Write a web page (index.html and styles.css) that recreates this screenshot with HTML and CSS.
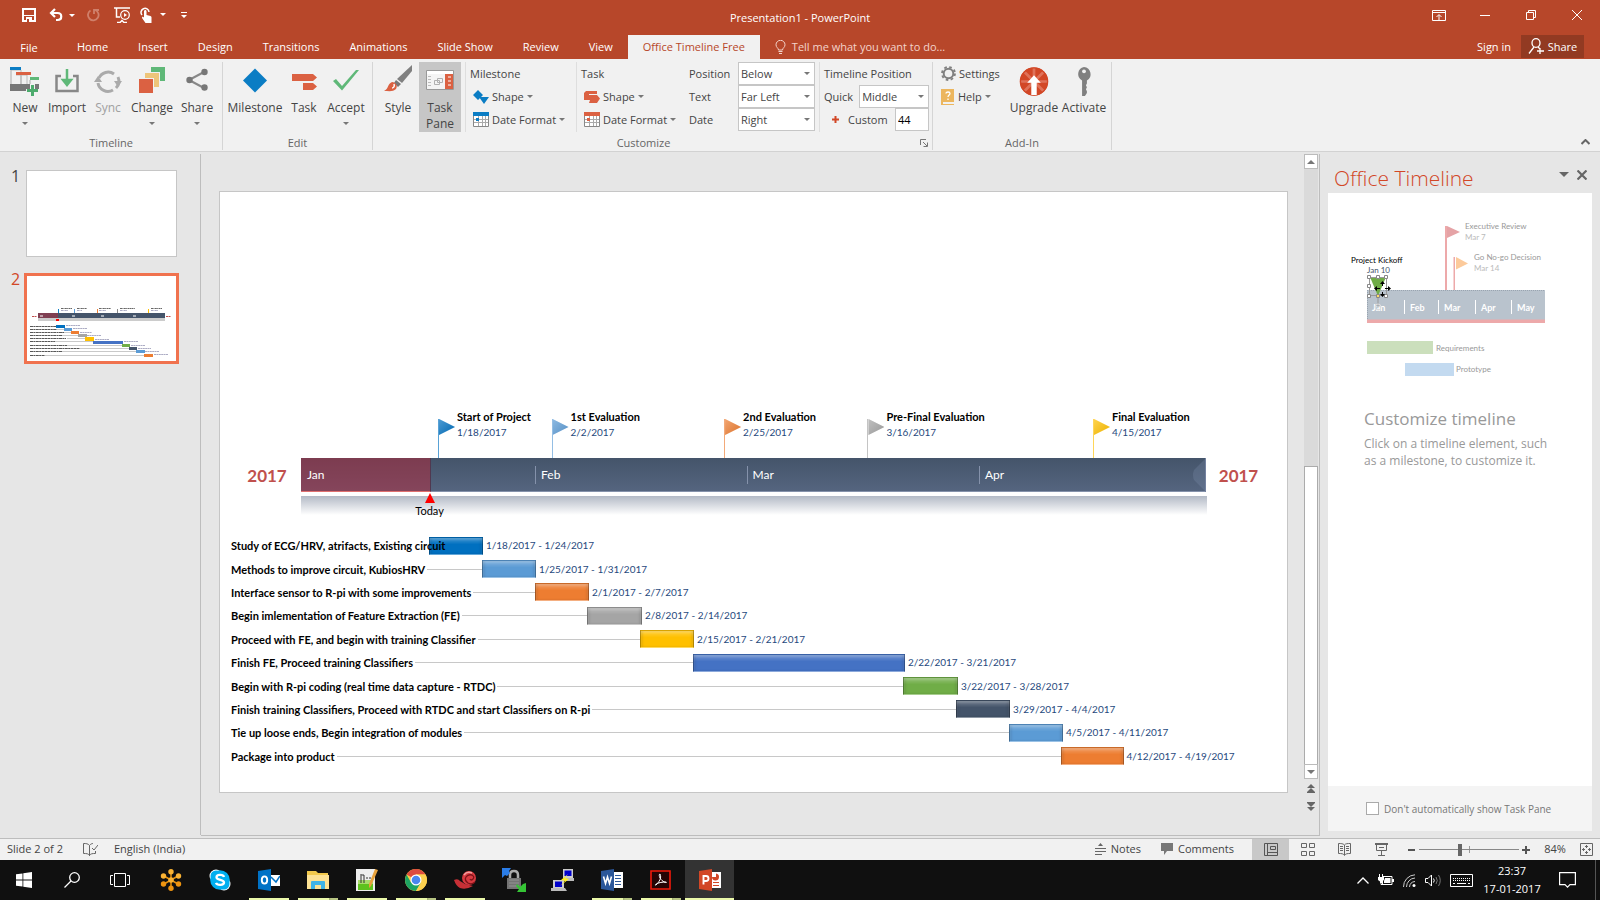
FILE: index.html
```html
<!DOCTYPE html>
<html lang="en">
<head>
<meta charset="utf-8">
<title>Presentation1 - PowerPoint</title>
<link rel="stylesheet" href="styles.css">
</head>
<body>
<div class="app">
<header class="chrome">
  <div class="titlebar">
    <div class="quick">
      <button aria-label="Save"><svg width="14" height="14" viewBox="0 0 14 14"><path d="M1 1h12v12H1z" fill="none" stroke="#fff" stroke-width="2"/><path d="M1 7h12v1H1zM4 9h6v5H4z" fill="#fff"/><path d="M5 11h2v3H5z" fill="#b7472a"/></svg></button>
      <button aria-label="Undo" class="q36"><svg width="26" height="14" viewBox="0 0 26 14"><path d="M6 1L2 5l4 4M2 5h6.500c5 0 5 7 0 7H7" fill="none" stroke="#fff" stroke-width="2.200"/><path d="M20 6h6l-3 3z" fill="#fff"/></svg></button>
      <button aria-label="Redo" class="q26"><svg width="14" height="14" viewBox="0 0 14 14"><path d="M4.500 2.500A5.300 5.300 0 1 0 9 2M8 6V2h5" fill="none" stroke="#d0806b" stroke-width="1.800"/></svg></button>
      <button aria-label="Start from beginning" class="q32"><svg width="16" height="16" viewBox="0 0 16 16" fill="none" stroke="#fff"><path d="M0 1h16M2.500 1v9H6M3 15.500h3l2-2 2 2h3" stroke-width="1.500"/><circle cx="11" cy="8" r="4.300" stroke-width="1.200"/><path d="M10 6l3 2-3 2z" fill="#fff" stroke="none"/></svg></button>
      <button aria-label="Touch mode"><svg width="26" height="16" viewBox="0 0 26 16"><path d="M2 8A4 4 0 1 1 9 5" fill="none" stroke="#fff" stroke-width="1.500"/><path d="M4 4.500c0-2 2.500-2 2.500 0V8l4 1c1 .5 1 1 1 2v5H5.500L2 11c0-1.500 1-1.500 2-.5z" fill="#fff"/><path d="M20 6h6l-3 3z" fill="#fff"/></svg></button>
      <button aria-label="Customize toolbar" class="q32"><svg width="6" height="7" viewBox="0 0 6 7" fill="#fff"><path d="M0 0h6v1H0zM0 3h6L3 6z"/></svg></button>
    </div>
    <h1>Presentation1 - PowerPoint</h1>
    <div class="wincontrols">
      <button aria-label="Ribbon display"><svg width="14" height="11" viewBox="0 0 14 11" fill="none" stroke="#fff"><path d="M.5.5h13v10H.5zM1 2.500h12M7 10V5M4.500 7L7 4.500 9.500 7"/></svg></button>
      <button aria-label="Minimize"><svg width="10" height="10" viewBox="0 0 10 10" stroke="#fff"><path d="M0 5.500h10"/></svg></button>
      <button aria-label="Restore"><svg width="10" height="10" viewBox="0 0 10 10" fill="none" stroke="#fff"><path d="M.5 2.500h7v7h-7zM2.500 2V.5h7v7H8"/></svg></button>
      <button aria-label="Close"><svg width="10" height="10" viewBox="0 0 10 10" stroke="#fff"><path d="M0 0l10 10M10 0L0 10"/></svg></button>
    </div>
  </div>
  <nav class="tabs">
    <button class="file">File</button><button>Home</button><button>Insert</button><button>Design</button><button>Transitions</button><button>Animations</button><button>Slide Show</button><button>Review</button><button>View</button><button class="active">Office Timeline Free</button>
    <button class="tell"><svg width="11" height="14" viewBox="0 0 11 14" fill="none" stroke="#f3d3ca"><path d="M3.500 10C3.500 8 1 7.500 1 4.800a4.500 4.500 0 0 1 9 0C10 7.500 7.500 8 7.500 10zM3.500 11.500h4M4 13.500h3"/></svg>Tell me what you want to do...</button>
    <span class="grow"></span>
    <button class="signin">Sign in</button>
    <button class="share"><svg width="17" height="17" viewBox="0 0 17 17" fill="none" stroke="#fff" stroke-width="1.300"><ellipse cx="8" cy="5" rx="4" ry="4.300"/><path d="M6 9L1 15.500M10 9l1.500 1.500M12 10v6M9 13h7"/></svg>Share</button>
  </nav>
</header>

<section class="ribbon">
  <div class="group g-timeline">
    <div class="tools">
      <button class="big w40"><svg width="30" height="29" viewBox="0 0 30 29"><path d="M1 3v14M11 8v9M20 13v4" stroke="#aaa" fill="none"/><path d="M1 3h10v14M6 8h11v9" stroke="#bbb" fill="none"/><path d="M0 0h11v3H0z" fill="#0b7dc4"/><path d="M6 5h15v3H6z" fill="#db6142"/><path d="M20 10h9v3h-9z" fill="#5fb878"/><path d="M0 17h29v7H0z" fill="#777"/><path d="M20 17h5v5h5v4h-5v3h-5v-3h-4v-4h4z" fill="#f1f1f1"/><path d="M21 18h3v4h4v3h-4v4h-3v-4h-4v-3h4z" fill="#4dab6d"/></svg>New<i class="caret"></i></button>
      <button class="big w44"><svg width="24" height="29" viewBox="0 0 24 29" fill="none"><path d="M6 9H1.500v15h21V9H18" stroke="#888" stroke-width="2.500"/><path d="M12 2v15M8 13l4 5 4-5z" stroke="#5fb878" stroke-width="2.500" fill="#5fb878"/></svg>Import</button>
      <button class="big w38 dim" disabled><svg width="28" height="29" viewBox="0 0 28 29" fill="none" stroke="#aaa" stroke-width="3"><path d="M5 11a10 10 0 0 1 15-4M24 10a10 10 0 0 1-2 11M19 23a10 10 0 0 1-15-7"/><path d="M0 15h8l-4-6zM20 14h8l-4 6z" fill="#aaa" stroke="none"/></svg>Sync</button>
      <button class="big w50"><svg width="26" height="29" viewBox="0 0 26 29"><path d="M12 0h14v14H12z" fill="#5fb878"/><path d="M5 5h16v16H5z" fill="#f1f1f1"/><path d="M6 6h14v14H6z" fill="#eec57a"/><path d="M0 11h15v15H0z" fill="#f1f1f1"/><path d="M0 12h14v14H0z" fill="#db6142"/></svg>Change<i class="caret"></i></button>
      <button class="big w40"><svg width="22" height="29" viewBox="0 0 22 29" fill="#777"><path d="M3 13L18 5M3 13l15 8" stroke="#888" stroke-width="2"/><circle cx="3.500" cy="13" r="3.200"/><circle cx="18.500" cy="5" r="3.200"/><circle cx="18.500" cy="20.500" r="3.200"/></svg>Share<i class="caret"></i></button>
    </div>
    <p class="caption">Timeline</p>
  </div>
  <div class="group g-edit">
    <div class="tools">
      <button class="big w62"><svg width="24" height="29" viewBox="0 0 24 29"><path d="M12 1.500L24 13.500 12 25.500 0 13.500z" fill="#0b7dc4"/></svg>Milestone</button>
      <button class="big w36"><svg width="25" height="29" viewBox="0 0 25 29" fill="#db6142"><path d="M0 7h21l4 3.500-4 3.500H0zM11 16h10l4 3.500-4 3.500H11z"/></svg>Task</button>
      <button class="big w48"><svg width="26" height="29" viewBox="0 0 26 29"><path d="M0 14l3-2 6 7L23 3h3L9 23.500z" fill="#5fb878"/></svg>Accept<i class="caret"></i></button>
    </div>
    <p class="caption">Edit</p>
  </div>
  <div class="group g-custom">
    <div class="tools">
      <button class="big w40"><svg width="29" height="29" viewBox="0 0 29 29"><path d="M28-2v6L18 16l-5-4z" fill="#808080"/><path d="M12 13l5 4-3 3-4-4z" fill="#777"/><path d="M0 24c5-2 3-7 8-9 4 0 6 4 4 7-3 3-7 2-12 2z" fill="#db6142"/><path d="M8 21c1 0 3-1 2-4" fill="none" stroke="#fff" stroke-width="1.500"/></svg>Style</button>
      <button class="big w42 pressed"><svg width="28" height="29" viewBox="0 0 28 29"><path d="M.5 3.500h27v19H.5z" fill="#f4f4f4" stroke="#999"/><path d="M1 4h26v3H1z" fill="#fff"/><path d="M19 7h8v15h-8z" fill="#db6142"/><path d="M22 10h3M22 14h3M22 18h3" stroke="#fff"/><path d="M2 9.500h3m-3 3h3m-3 3h3m-3 3h3" stroke="#bbb"/><path d="M8.500 13.500h5v4h-5zM11.500 11.500h5v4h-5z" fill="none" stroke="#b0b0b0"/></svg>Task<br>Pane</button>
      <div class="stack s-milestone">
        <span class="head">Milestone</span>
        <button class="small"><svg width="16" height="14" viewBox="0 0 16 14" fill="#0b7dc4"><path d="M5 0l5 5-5 5-5-5zM6 7h10l-5 7z"/></svg>Shape<i class="caret"></i></button>
        <button class="small"><svg width="16" height="15" viewBox="0 0 16 15"><path d="M.5.5h15v14H.5z" fill="#fff" stroke="#888"/><path d="M0 0h16v4H0z" fill="#0b7dc4"/><path d="M5.500 4v10m4-10v10m3-10v10M1 7.500h14m-14 3h14" stroke="#aaa"/><path d="M3 6h3v3H3z" fill="#0b7dc4"/></svg>Date Format<i class="caret"></i></button>
      </div>
      <div class="stack s-task">
        <span class="head">Task</span>
        <button class="small"><svg width="16" height="14" viewBox="0 0 16 14" fill="#db6142"><path d="M2 1h11v3H5v1h8l3 3.500-3 4.500H5l1-3H0V3z"/></svg>Shape<i class="caret"></i></button>
        <button class="small"><svg width="16" height="15" viewBox="0 0 16 15"><path d="M.5.5h15v14H.5z" fill="#fff" stroke="#888"/><path d="M0 0h16v4H0z" fill="#db6142"/><path d="M5.500 4v10m4-10v10m3-10v10M1 7.500h14m-14 3h14" stroke="#aaa"/><path d="M3 6h3v3H3z" fill="#db6142"/></svg>Date Format<i class="caret"></i></button>
      </div>
      <div class="fields">
        <label for="pos">Position</label><span class="combo"><select id="pos"><option>Below</option></select></span>
        <label for="txt">Text</label><span class="combo"><select id="txt"><option>Far Left</option></select></span>
        <label for="dat">Date</label><span class="combo"><select id="dat"><option>Right</option></select></span>
      </div>
      <div class="stack s-pos">
        <span class="head">Timeline Position</span>
        <div class="line"><label for="quick">Quick</label><span class="combo"><select id="quick"><option>Middle</option></select></span></div>
        <div class="line"><svg width="7" height="7" viewBox="0 0 7 7" stroke="#d24726" stroke-width="2"><path d="M3.500 0v7M0 3.500h7"/></svg><label for="custom">Custom</label><input id="custom" type="text" value="44"></div>
      </div>
    </div>
    <p class="caption">Customize<svg class="launcher" width="8" height="8" viewBox="0 0 8 8" fill="none" stroke="#777"><path d="M.5 6V.5H6M3 3l4 4M7.500 3.500v4h-4"/></svg></p>
  </div>
  <div class="group g-addin">
    <div class="tools">
      <div class="stack s-addin">
        <button class="small"><svg width="15" height="15" viewBox="0 0 15 15" fill="none" stroke="#808080"><circle cx="7.500" cy="7.500" r="4.800" stroke-width="2"/><circle cx="7.500" cy="7.500" r="6.500" stroke-width="1.800" stroke-dasharray="2.600 2.500"/></svg>Settings</button>
        <button class="small"><svg width="14" height="16" viewBox="0 0 14 16"><path d="M0 0h13v13H2v2h11v1H0z" fill="#ecb65e"/><path d="M5 4.500c0-2 4-2 4 0C9 6 7 6 7 8M7 9.500V11" stroke="#fff" stroke-width="1.300" fill="none"/></svg>Help<i class="caret"></i></button>
      </div>
      <button class="big w54"><svg width="32" height="32" viewBox="0 0 32 32"><circle cx="16" cy="16" r="15.500" fill="#d24726"/><g stroke="#df7259" stroke-width="3"><path d="M16 1v30M1 16h30M5.500 5.500l21 21M26.500 5.500l-21 21"/></g><circle cx="16" cy="16" r="15" fill="none" stroke="#d24726" stroke-width="1.500"/><path d="M16 9l7.500 8.500H19V31h-6V17.500H8.500z" fill="#fff"/></svg>Upgrade</button>
      <button class="big w46"><svg width="16" height="30" viewBox="0 0 16 30" fill="#808080"><path d="M8 0a7.500 7.500 0 0 1 3 14v3l-1 2 1 2-1 2 1 2v2l-2 3H6V14A7.500 7.500 0 0 1 8 0z"/><circle cx="8" cy="4.500" r="2" fill="#f1f1f1"/></svg>Activate</button>
    </div>
    <p class="caption">Add-In</p>
  </div>
  <button class="collapse" aria-label="Collapse ribbon"><svg width="9" height="6" viewBox="0 0 9 6" fill="none" stroke="#666" stroke-width="2"><path d="M.5 5l4-4 4 4"/></svg></button>
</section>

<main class="work">
  <aside class="thumbs">
    <div class="thumb"><span>1</span><div class="mini"></div></div>
    <div class="thumb on"><span>2</span><div class="mini">
      <svg viewBox="0 0 149 85" width="149" height="85">
        <g stroke="#555" stroke-dasharray="2 .4 1 .4" stroke-width=".9"><path d="M34 32.500h11M50 32.500h10M72 32.500h12M93 32.500h15M124 32.500h11"/><path d="M34 34.500h7M50 34.500h5M72 34.500h7M93 34.500h7M124 34.500h7" stroke="#88a" stroke-width=".7"/></g>
        <g><path d="M31.500 33v5" stroke="#0b7dc4"/><path d="M47.500 33v5" stroke="#5b9bd5"/><path d="M70.500 33v5" stroke="#ed7d31"/><path d="M90.500 33v5" stroke="#888"/><path d="M121.500 33v5" stroke="#ffc000"/></g>
        <path d="M11 42h127v3H11z" fill="#ccc"/><path d="M11 37h127v5H11z" fill="#44546a"/><path d="M11 37h20v5H11z" fill="#7f3f52"/><path d="M13 40h3M45 40h3M74 40h3M106 40h3" stroke="#fff"/><path d="M29 43h3v2h-3z" fill="#f00"/>
        <path d="M5 40.500h5M139 40.500h5" stroke="#c0504d" stroke-dasharray="2 .5"/>
        <path d="M30 53.500h14M35 56.500h16M34 59.500h24M40 62.500h26M28 65.500h38M40 69.500h55M53 72.500h49M35 75.500h74M18 79.500h99" stroke="#bbb" stroke-width=".8"/>
        <g stroke="#444" stroke-dasharray="3 .4 2 .4" stroke-width=".9"><path d="M3 50.500h28M3 53.500h27M3 56.500h34M3 59.500h32M3 62.500h36M3 65.500h25M3 69.500h37M3 72.500h50M3 75.500h32M3 79.500h15"/></g>
        <g><path d="M29 49h9v3h-9z" fill="#0070c0"/><path d="M37 52h8v3h-8z" fill="#5b9bd5"/><path d="M44 55h8v3h-8z" fill="#ed7d31"/><path d="M51 58h9v3h-9z" fill="#a5a5a5"/><path d="M58 61h9v4h-9z" fill="#ffc000"/><path d="M66 65h30v3H66z" fill="#4472c4"/><path d="M95 68h8v3h-8z" fill="#70ad47"/><path d="M102 71h8v3h-8z" fill="#44546a"/><path d="M109 74h9v3h-9z" fill="#5b9bd5"/><path d="M117 78h9v3h-9z" fill="#ed7d31"/></g>
        <g stroke="#88a" stroke-dasharray="2 .4" stroke-width=".7"><path d="M39 49.500h14M46 52.500h14M53 56.500h12M60 59.500h14M68 63.500h14M97 65.500h14M104 69.500h14M111 72.500h13M118 75.500h14M127 78.500h14"/></g>
      </svg></div></div>
  </aside>
  <div class="stage">
    <article class="slide">
      <div class="markers">
        <div class="marker" style="left:20.43%;--c:#0070c0"><i></i><b>Start of Project</b><span>1/18/2017</span></div>
        <div class="marker" style="left:31.07%;--c:#5b9bd5"><i></i><b>1st Evaluation</b><span>2/2/2017</span></div>
        <div class="marker" style="left:47.24%;--c:#ed7d31"><i></i><b>2nd Evaluation</b><span>2/25/2017</span></div>
        <div class="marker" style="left:60.68%;--c:#a5a5a5"><i></i><b>Pre-Final Evaluation</b><span>3/16/2017</span></div>
        <div class="marker" style="left:81.82%;--c:#ffc000"><i></i><b>Final Evaluation</b><span>4/15/2017</span></div>
      </div>
      <div class="axis">
        <strong>2017</strong>
        <div class="band">
          <div class="past" style="width:14.31%"></div>
          <span style="width:25.86%">Jan</span><span style="width:23.37%">Feb</span><span style="width:25.69%">Mar</span><span style="width:25.08%">Apr</span>
          <svg class="bevel" width="14" height="34" viewBox="0 0 14 34"><path d="M14 0L2 12q-2 5 0 10l12 12z" fill="#8fa0bd" fill-opacity=".22"/><path d="M13.500 0v34" stroke="#7482a0"/></svg>
          <div class="today" style="left:14.21%"><svg width="10" height="10" viewBox="0 0 10 10"><path d="M5 0l5 10H0z" fill="#f00"/></svg>Today</div>
        </div>
        <strong>2017</strong>
      </div>
      <div class="mirror"></div>
      <div class="tasks">
        <div class="row"><div class="lead" style="width:19.59%">Study of ECG/HRV, atrifacts, Existing circuit<i></i></div><div class="bar" style="width:5.06%;--c:#0070c0"></div><span>1/18/2017 - 1/24/2017</span></div>
        <div class="row"><div class="lead" style="width:24.55%">Methods to improve circuit, KubiosHRV<i></i></div><div class="bar" style="width:5.06%;--c:#5b9bd5"></div><span>1/25/2017 - 1/31/2017</span></div>
        <div class="row"><div class="lead" style="width:29.52%">Interface sensor to R-pi with some improvements<i></i></div><div class="bar" style="width:5.06%;--c:#ed7d31"></div><span>2/1/2017 - 2/7/2017</span></div>
        <div class="row"><div class="lead" style="width:34.4%">Begin imlementation of Feature Extraction (FE)<i></i></div><div class="bar" style="width:5.15%;--c:#a5a5a5"></div><span>2/8/2017 - 2/14/2017</span></div>
        <div class="row"><div class="lead" style="width:39.36%">Proceed with FE, and begin with training Classifier<i></i></div><div class="bar" style="width:5.06%;--c:#ffc000"></div><span>2/15/2017 - 2/21/2017</span></div>
        <div class="row"><div class="lead" style="width:44.33%">Finish FE, Proceed training Classifiers<i></i></div><div class="bar" style="width:19.87%;--c:#4472c4"></div><span>2/22/2017 - 3/21/2017</span></div>
        <div class="row"><div class="lead" style="width:64.01%">Begin with R-pi coding (real time data capture - RTDC)<i></i></div><div class="bar" style="width:5.15%;--c:#70ad47"></div><span>3/22/2017 - 3/28/2017</span></div>
        <div class="row"><div class="lead" style="width:68.98%">Finish training Classifiers, Proceed with RTDC and start Classifiers on R-pi<i></i></div><div class="bar" style="width:5.06%;--c:#44546a"></div><span>3/29/2017 - 4/4/2017</span></div>
        <div class="row"><div class="lead" style="width:73.95%">Tie up loose ends, Begin integration of modules<i></i></div><div class="bar" style="width:5.06%;--c:#5b9bd5"></div><span>4/5/2017 - 4/11/2017</span></div>
        <div class="row"><div class="lead" style="width:78.82%">Package into product<i></i></div><div class="bar" style="width:5.86%;--c:#ed7d31"></div><span>4/12/2017 - 4/19/2017</span></div>
      </div>
    </article>
  </div>
  <div class="scroll">
    <button aria-label="Scroll up"><svg width="8" height="4" viewBox="0 0 8 4"><path d="M0 4l4-4 4 4z" fill="#777"/></svg></button>
    <div class="track"></div>
    <div class="grip"></div>
    <button aria-label="Scroll down"><svg width="8" height="4" viewBox="0 0 8 4"><path d="M0 0h8L4 4z" fill="#777"/></svg></button>
    <button class="jump" aria-label="Previous slide"><svg width="8" height="9" viewBox="0 0 8 9" fill="#666"><path d="M0 4l4-4 4 4zM0 8l4-4 4 4v1H0z"/></svg></button>
    <button class="jump" aria-label="Next slide"><svg width="8" height="9" viewBox="0 0 8 9" fill="#666"><path d="M0 0h8v1L4 5 0 1zM0 5h8L4 9z"/></svg></button>
  </div>
  <aside class="pane">
    <div class="panehead"><h2>Office Timeline</h2><button aria-label="Pane options"><svg width="10" height="5" viewBox="0 0 10 5"><path d="M0 0h10L5 5z" fill="#666"/></svg></button><button aria-label="Close pane"><svg width="10" height="10" viewBox="0 0 10 10" stroke="#666" stroke-width="2.200"><path d="M.5.5l9 9M9.500.5l-9 9"/></svg></button></div>
    <div class="panebody">
      <svg class="demo" width="264" height="200" viewBox="0 0 264 200">
        <path d="M117 33h2v64h-2zM125.500 64h1.500v33h-1.500z" fill="#eda9aa"/>
        <path d="M119 33l13 6-13 6z" fill="#e5a3a6"/><path d="M128 64l12 6.500-12 6z" fill="#fcca9b"/>
        <path d="M39 97h178v30H39z" fill="#b9c3cd"/><path d="M39 97.500h178M39.500 97v30" stroke="#99a4b0" stroke-dasharray="1 1" fill="none"/><path d="M39 126.500h178v3.500H39z" fill="#eda9aa"/>
        <path d="M76.500 107v14M110.500 107v14M147.500 107v14M183.500 107v14" stroke="#fff"/>
        <g class="months"><text x="44" y="118">Jan</text><text x="82" y="118">Feb</text><text x="116" y="118">Mar</text><text x="153" y="118">Apr</text><text x="189" y="118">May</text></g>
        <g class="faded"><text x="137" y="36">Executive Review</text><text x="146" y="67">Go No-go Decision</text><text x="108" y="158">Requirements</text><text x="128" y="179">Prototype</text></g>
        <g class="fainter"><text x="137" y="47">Mar 7</text><text x="146" y="78">Mar 14</text></g>
        <text class="kick" x="23" y="70">Project Kickoff</text><text class="kickdate" x="39" y="80">Jan 10</text>
        <path d="M39 148h66v13H39z" fill="#cbdfbc"/><path d="M77 170h49v13H77z" fill="#c3daf0"/>
        <path d="M42 84h16l-8 19z" fill="#6fac46"/>
        <path d="M41.500 84.500h17v18h-17zM50 103v11" fill="none" stroke="#999"/>
        <g fill="#fff" stroke="#888"><path d="M39.500 82.500h3v3h-3zM48.500 82.500h3v3h-3zM56.500 82.500h3v3h-3zM39.500 91.500h3v3h-3zM39.500 101.500h3v3h-3zM56.500 101.500h3v3h-3z"/><path d="M48.500 101.500h3v3h-3z" fill="#fd6"/><circle cx="50" cy="114" r="3" fill="none" stroke="#ddd"/></g>
        <g stroke="#000" fill="#000"><path d="M54.500 90v3M54.500 99v3M49 95.500h3M57 95.500h3"/><path d="M52 91l2.500-3 2.500 3zM52 101l2.500 3 2.500-3zM49 93l-3 2.500 3 2.500zM60 93l3 2.500-3 2.500z" stroke="none"/></g>
      </svg>
      <h3>Customize timeline</h3>
      <p>Click on a timeline element, such<br>as a milestone, to customize it.</p>
    </div>
    <div class="panefoot"><input type="checkbox" id="noshow"><label for="noshow">Don't automatically show Task Pane</label></div>
  </aside>
</main>

<footer class="status">
  <span>Slide 2 of 2</span>
  <button aria-label="Spelling" class="spell"><svg width="15" height="13" viewBox="0 0 15 13" fill="none" stroke="#666"><path d="M6.500 2.500V13M6.500 2.500C5 .5 3 .5.500.5v10c3 0 5 0 6 2 1-2 3-2 6-2V8M6.500 2.500C7.500 1 9 .5 10 .5M9 5l2 2 4-5" /></svg></button>
  <span>English (India)</span>
  <span class="grow"></span>
  <button class="notes"><svg width="11" height="12" viewBox="0 0 11 12" stroke="#666"><path d="M0 5.500h11M0 8.500h11M0 11.500h7"/><path d="M3 3l2.500-3L8 3z" fill="#666" stroke="none"/></svg>Notes</button>
  <button class="comments"><svg width="12" height="12" viewBox="0 0 12 12" fill="#777"><path d="M0 0h12v8H6l-3 4V8H0z"/></svg>Comments</button>
  <div class="views">
    <button class="on" aria-label="Normal"><svg width="14" height="13" viewBox="0 0 14 13" fill="none" stroke="#555"><path d="M.5.5h13v12H.5zM3.500 1v11M4 9.500h9M6.500 3.500h5v3h-5z"/></svg></button>
    <button aria-label="Slide sorter"><svg width="14" height="13" viewBox="0 0 14 13" fill="none" stroke="#666"><path d="M.5.5h5v4h-5zM8.500.5h5v4h-5zM.5 8.500h5v4h-5zM8.500 8.500h5v4h-5z"/></svg></button>
    <button aria-label="Reading view"><svg width="13" height="13" viewBox="0 0 13 13" fill="none" stroke="#666"><path d="M6.500 2C5 .5 3 .5.500.5v10c3 0 5 0 6 2 1-2 3-2 6-2V.5c-3 0-5 0-6 1.500v10M2 3.500h3m-3 2h3m-3 2h3m3-4h3m-3 2h3m-3 2h3"/></svg></button>
    <button aria-label="Slide show"><svg width="13" height="13" viewBox="0 0 13 13" fill="none" stroke="#666"><path d="M0 1h13" stroke-width="2"/><path d="M1.500 2v5.500h10V2M4 4.500h5M6.500 8v4M3 12.500h7"/></svg></button>
  </div>
  <button class="zoomer" aria-label="Zoom out"><svg width="7" height="8" viewBox="0 0 7 8"><path d="M0 4h7" stroke="#555" stroke-width="2"/></svg></button>
  <input type="range" aria-label="Zoom" min="0" max="100" value="41">
  <button class="zoomer" aria-label="Zoom in"><svg width="8" height="8" viewBox="0 0 8 8"><path d="M0 4h8M4 0v8" stroke="#555" stroke-width="2"/></svg></button>
  <button class="pct">84%</button>
  <button class="fit" aria-label="Fit slide"><svg width="13" height="13" viewBox="0 0 13 13" fill="none" stroke="#666"><path d="M.5.5h12v12H.5z"/><path d="M6.500 2v3M6.500 8v3M2 6.500h3M8 6.500h3M5 3.500h3M5 9.500h3M3.500 5v3M9.500 5v3"/></svg></button>
</footer>

<nav class="taskbar">
  <button class="sys" aria-label="Start"><svg width="16" height="16" viewBox="0 0 16 16" fill="#fff"><path d="M0 2.300l6.500-.9v6.200H0zM7.300 1.300L16 0v7.600H7.300zM0 8.400h6.500v6.200L0 13.700zM7.300 8.400H16V16l-8.700-1.300z"/></svg></button>
  <button class="sys" aria-label="Search"><svg width="16" height="16" viewBox="0 0 16 16" fill="none" stroke="#fff" stroke-width="1.300"><circle cx="10.500" cy="5.500" r="4.800"/><path d="M7 9l-6.500 6.500"/></svg></button>
  <button class="sys" aria-label="Task view"><svg width="20" height="14" viewBox="0 0 20 14" fill="none" stroke="#fff"><path d="M4.500.5h11v13h-11zM3 2.500H.5v9H3M17 2.500h2.500v9H17"/></svg></button>
  <div class="apps">
  <button aria-label="Flower"><svg width="22" height="22" viewBox="0 0 22 22"><g stroke="#e8920e" stroke-width="1.500"><path d="M11 11V4M11 11v7M11 11L4 7M11 11l7-4M11 11l-7 4M11 11l7 4"/></g><g fill="#f9b233"><circle cx="11" cy="2.800" r="2.700"/><circle cx="3.500" cy="7" r="2.700"/><circle cx="18.500" cy="7" r="2.700"/><circle cx="3.500" cy="15" r="2.700" fill="#ee9410"/><circle cx="18.500" cy="15" r="2.700" fill="#ee9410"/><circle cx="11" cy="19.200" r="2.700" fill="#ee9410"/><circle cx="11" cy="11" r="2.800"/></g></svg></button>
  <button aria-label="Skype"><svg width="22" height="22" viewBox="0 0 22 22"><circle cx="7" cy="7" r="6.500" fill="#fff"/><circle cx="15" cy="15" r="6.500" fill="#fff"/><circle cx="11" cy="11" r="9.800" fill="#00aff0"/><circle cx="7" cy="7" r="5.500" fill="#00aff0"/><circle cx="15" cy="15" r="5.500" fill="#00aff0"/><path d="M15 8c-1-3-7.500-2.500-7.500.3 0 3.200 7.500 2 7.500 5.200 0 3-7 3-8 .3" fill="none" stroke="#fff" stroke-width="2.300"/></svg></button>
  <button class="run" aria-label="Outlook"><svg width="22" height="22" viewBox="0 0 22 22"><path d="M12 6h10v11H12z" fill="#fff"/><path d="M13 8l5 5 4-6" fill="none" stroke="#0072c6" stroke-width="1.500"/><path d="M0 2l13-2v22L0 20z" fill="#0072c6"/><ellipse cx="6.500" cy="11" rx="2.700" ry="3.600" fill="none" stroke="#fff" stroke-width="1.900"/></svg></button>
  <button class="run multi" aria-label="Files"><svg width="22" height="19" viewBox="0 0 22 19"><path d="M0 0h9l2 2h10v16H0z" fill="#f2c94c"/><path d="M0 4h22v14H0z" fill="#fde294"/><path d="M4 18v-7q0-1 1-1h12q1 0 1 1v7h-4v-4H8v4z" fill="#3fb4e8"/></svg></button>
  <button class="run" aria-label="Notepad"><svg width="22" height="24" viewBox="0 0 22 24"><path d="M0 1h19v22H0z" fill="#eee"/><path d="M2 12h15v10H2z" fill="#5ec21e"/><path d="M2 12h15v4H2z" fill="#a9dc6a"/><path d="M5 6v9M5.500 7H8v8M10 10h2M13 10h2" stroke="#333" fill="none"/><path d="M19 1l3 1-7 16-2 2v-4z" fill="#e8a23d"/></svg></button>
  <button class="run multi" aria-label="Chrome"><svg width="22" height="22" viewBox="0 0 22 22"><circle cx="11" cy="11" r="11" fill="#fc4"/><path d="M11 11L1.500 5.500A11 11 0 0 1 20.500 5.500H11z" fill="#dd4b3e"/><path d="M1.500 5.500A11 11 0 0 0 11 22l5-8.500H6z" fill="#1da462"/><path d="M11 5.500h9.500a11 11 0 0 1-9.500 16.500l5-8.500z" fill="#fdd04e"/><circle cx="11" cy="11" r="5.500" fill="#fff"/><circle cx="11" cy="11" r="4.300" fill="#4a86ee"/></svg></button>
  <button class="run" aria-label="Snail"><svg width="22" height="20" viewBox="0 0 22 20"><path d="M0 10q4-2 6 1l5 3 8 2q-7 4-13 2-4-2-6-8z" fill="#c73036"/><circle cx="15" cy="8" r="7" fill="#d93a40"/><path d="M21 12q-3 3-7 1-4-3-2-6t6-2q3 2 1 4t-3 0" fill="none" stroke="#7c1218" stroke-width="1.300"/><path d="M10 5q3-4 8-2" stroke="#f2a0a0" stroke-width="1.500" fill="none"/></svg></button>
  <button aria-label="Secure transfer"><svg width="24" height="24" viewBox="0 0 24 24"><path d="M8 11V7q0-4 4-4t4 4v4" fill="none" stroke="#aaa" stroke-width="2.500"/><path d="M5 10h14v11H5z" fill="#747474"/><path d="M7 12h10M7 15h10M7 18h10" stroke="#949494"/><path d="M0 0h9L7 3l1 2-3 3-2-1-3 3z" fill="#2a7de8"/><path d="M15 16l3 3 3-3 3-1v9h-9l2-3-3-3z" fill="#35c535"/></svg></button>
  <button aria-label="PuTTY"><svg width="24" height="24" viewBox="0 0 24 24"><path d="M12 1h10v9H12zM2 12h11v9H2z" fill="#ccc"/><path d="M13.500 2.500h7V8h-7zM4 13.500h7V19H4z" fill="#00c"/><path d="M0 20h14l2 3H0zM14 10h9v3H13z" fill="#bbb"/><path d="M17 6l-7 6 4 1-5 5 9-7-4-1z" fill="#fe2"/></svg></button>
  <button class="run multi" aria-label="Word"><svg width="22" height="22" viewBox="0 0 22 22"><path d="M12 3h10v16H12z" fill="#fff"/><path d="M14 6.500h6m-6 3h6m-6 3h6m-6 3h6" stroke="#2b579a"/><path d="M0 2l13-2v22L0 20z" fill="#2b579a"/><path d="M2.500 7.500l2 7 2-6.500 2 6.500 2-7" fill="none" stroke="#fff" stroke-width="1.600"/></svg></button>
  <button class="run multi" aria-label="Acrobat"><svg width="21" height="20" viewBox="0 0 21 20"><path d="M1 1h19v18H1z" fill="#250505" stroke="#f21a0a" stroke-width="1.600"/><path d="M10 4c2 4-1 8-4 11-2 1 0-3 10-3 2 1-3 1-6-4-1-2-1-4 0-4z" fill="none" stroke="#fff"/></svg></button>
  <button class="run current" aria-label="PowerPoint"><svg width="22" height="22" viewBox="0 0 22 22"><path d="M12 3h10v16H12z" fill="#fff"/><path d="M14 13.500h6m-6 3h6" stroke="#d24726"/><path d="M13 8a3.500 3.500 0 1 0 4-3.500V8z" fill="#d24726"/><path d="M0 2l13-2v22L0 20z" fill="#d24726"/><path d="M4.500 15.500V7h2.500q2.500 0 2.500 2.500T7 12H5" fill="none" stroke="#fff" stroke-width="1.900"/></svg></button>
  </div>
  <span class="grow"></span>
  <div class="tray">
    <button aria-label="Hidden icons"><svg width="12" height="7" viewBox="0 0 12 7" fill="none" stroke="#fff" stroke-width="1.300"><path d="M.5 6.500L6 1l5.500 5.500"/></svg></button>
    <button aria-label="Battery"><svg width="16" height="12" viewBox="0 0 16 12"><path d="M4.500 2.500H14v8H4.500z" stroke="#fff" fill="none"/><path d="M7 4h5.500v5H6V7zM14 5h2v3h-2z" fill="#fff"/><path d="M1.500 0v3M4.500 0v3" stroke="#fff"/><path d="M0 3h6v3L4 7.500V9H2V7.500L0 6z" fill="#fff"/><path d="M3 8v2.500h2" stroke="#fff" fill="none"/></svg></button>
    <button aria-label="Wireless"><svg width="13" height="13" viewBox="0 0 13 13" fill="none" stroke="#ccc"><path d="M.5 13A12 12 0 0 1 12 .8M3.500 13A9 9 0 0 1 12 4M6.500 13A6 6 0 0 1 12 7.500"/><circle cx="11" cy="11.500" r="1.500" fill="#fff" stroke="none"/></svg></button>
    <button aria-label="Volume"><svg width="16" height="13" viewBox="0 0 16 13" fill="none" stroke="#fff"><path d="M.5 4.500H3L6.500 1v11L3 8.500H.5zM8.500 4.500q1.500 2 0 4"/><path d="M11 3q2.500 3.500 0 7M13.500 1q3.500 5.500 0 11" stroke="#777"/></svg></button>
    <button aria-label="Keyboard"><svg width="23" height="13" viewBox="0 0 23 13" fill="none" stroke="#fff"><path d="M.5.5h22v12H.5z"/><path d="M3 4.500h17M3 6.500h17" stroke-dasharray="1 1"/><path d="M3 9.500h2M7 9.500h9M18 9.500h2"/></svg></button>
    <time><span>23:37</span><span>17-01-2017</span></time>
    <button aria-label="Notifications"><svg width="17" height="16" viewBox="0 0 17 16" fill="none" stroke="#fff" stroke-width="1.200"><path d="M.6.6h15.800v12H11l-2.500 2.500L6 12.600H.6z"/></svg></button>
  </div>
</nav>
</div>
</body>
</html>
```
FILE: styles.css
```css
* { box-sizing: border-box; }
body { margin: 0; font: 11px/16px "Open Sans", "Noto Sans", sans-serif; color: #444; background: #e6e6e6; }
h1, h2, h3, p { margin: 0; font-weight: 400; }
button { margin: 0; padding: 0; border: 0; background: none; font: inherit; color: inherit; display: flex; align-items: center; justify-content: center; white-space: nowrap; }
svg { display: block; flex: none; }
select, input { font: inherit; color: inherit; margin: 0; }
.app { min-height: 100vh; display: flex; flex-direction: column; }
.grow { flex: 1; }
.caret { border: 3px solid transparent; border-top-color: #777; border-bottom: 0; width: 6px; height: 3px; }

/* title bar and tabs */
.chrome { background: #b7472a; color: #fff; }
.titlebar { display: grid; grid-template-columns: 1fr auto 1fr; align-items: center; height: 35px; }
.titlebar h1 { font-size: 11px; padding-top: 1px; }
.quick { display: flex; align-items: center; padding: 0 0 5px 14px; }
.quick button { width: 30px; height: 24px; }
.quick .q26 { width: 26px; }
.quick .q32 { width: 32px; }
.quick .q36 { width: 36px; }
.wincontrols { display: flex; justify-content: flex-end; padding-bottom: 5px; }
.wincontrols button { width: 46px; height: 26px; }
.tabs { display: flex; height: 24px; }
.tabs button { padding: 0 15px; }
.tabs .file { width: 58px; margin-right: 4px; padding-top: 2px; }
.tabs .active { background: #f1f1f1; color: #b7472a; }
.tabs .tell { gap: 6px; color: #f3d3ca; }
.tabs .signin { padding: 0 10px; }
.tabs .share { background: #923a22; width: 63px; height: 23px; padding: 0; gap: 3px; margin-right: 16px; }

/* ribbon */
.ribbon { display: flex; background: #f1f1f1; padding: 3px 0 1px; border-bottom: 1px solid #d2d2d2; height: 93px; }
.group { display: flex; flex-direction: column; border-right: 1px solid #d5d5d5; justify-content: space-between; }
.tools { display: flex; height: 70px; }
.caption { text-align: center; color: #666; position: relative; line-height: 14px; }
.launcher { position: absolute; right: 4px; top: 3px; }
.g-timeline .tools { padding: 0 5px; }
.g-edit .tools { padding: 0 2px 0 1px; }
.g-custom .tools { padding: 0 3px 0 5px; }
.g-custom .caption { padding-right: 18px; }
.g-addin .tools { padding: 0 4px 0 8px; }
.big { flex-direction: column; justify-content: flex-start; padding-top: 5px; font-size: 12px; line-height: 16px; }
.big svg { height: 29px; margin-bottom: 4px; overflow: visible; }
.big .caret { margin-top: 6px; }
.big.dim { color: #a0a0a0; }
.pressed { background: #c6c6c6; margin: 0 4px 0 1px; }
.w36 { width: 36px; } .w38 { width: 38px; } .w40 { width: 40px; } .w42 { width: 42px; } .w44 { width: 44px; }
.w46 { width: 46px; } .w48 { width: 48px; } .w50 { width: 50px; } .w54 { width: 54px; } .w62 { width: 62px; }
.stack { display: grid; grid-template-rows: repeat(3, 23px); align-items: center; position: relative; }
.small { justify-content: flex-start; gap: 3px; }
.s-milestone, .s-task, .s-pos { border-left: 1px solid #dedede; padding-left: 4px; }
.s-milestone { width: 111px; }
.s-task { width: 113px; }
.s-milestone .small, .s-task .small { padding-left: 3px; }
.fields { display: grid; grid-template: repeat(3, 23px) / 49px 77px; align-items: center; padding-right: 4px; }
.combo { position: relative; display: block; height: 23px; flex: 1; }
.combo select { appearance: none; width: 100%; height: 23px; border: 1px solid #c6c6c6; border-radius: 0; background: #fff; padding: 0 2px; }
.combo::after { content: ""; position: absolute; right: 5px; top: 10px; border: 3px solid transparent; border-top-color: #777; border-bottom: 0; }
.s-pos { width: 110px; }
.line { display: flex; align-items: center; gap: 6px; }
.line svg { margin: 0 3px 0 8px; }
.line input { width: 34px; height: 23px; border: 1px solid #c6c6c6; background: #fff; padding: 0 2px; margin-left: auto; color: #000; }
.s-addin { width: 66px; }
.collapse { margin: auto 10px 2px auto; height: 12px; }

/* workspace */
.work { flex: 1; display: grid; grid-template-columns: 201px 1fr 16px 280px; border-bottom: 1px solid #bdbdbd; padding: 2px 0; }
.thumbs { border-right: 1px solid #bdbdbd; padding: 16px 0 0 11px; margin-bottom: 1px; }
.thumb { display: flex; gap: 6px; font-size: 16px; line-height: 12px; margin-bottom: 16px; }
.thumb span { width: 9px; }
.mini { width: 151px; height: 87px; background: #fff; border: 1px solid #c6c6c6; }
.thumb.on { color: #d24726; gap: 4px; }
.thumb.on .mini { width: 155px; height: 91px; border: 3px solid #f0724e; }
.stage { padding: 37px 16px 42px 18px; border-bottom: 1px solid #bdbdbd; }
.slide { width: 100%; aspect-ratio: 1069 / 602; background: #fff; border: 1px solid #c6c6c6; display: flex; flex-direction: column; padding-top: 217px; font: 10px/15px Lato, "Open Sans", sans-serif; color: #1f497d; }
.markers { position: relative; height: 49px; }
.marker { position: absolute; top: 10px; bottom: 0; padding-left: 19px; display: flex; flex-direction: column; white-space: nowrap; }
.marker::before { content: ""; position: absolute; left: 0; top: 0; bottom: 0; width: 1px; background: var(--c); opacity: .65; }
.marker b { color: #000; font-size: 11px; line-height: 16px; margin-top: -10px; }
.marker i { position: absolute; left: 1px; top: 0; width: 16px; height: 16px; background: linear-gradient(135deg, rgba(255,255,255,.3), rgba(0,0,0,.08)) var(--c); clip-path: polygon(0 0, 100% 50%, 0 100%); }
.axis { display: flex; align-items: center; }
.axis strong { width: 81px; text-align: center; padding-left: 13px; font-size: 17px; color: #c0504d; }
.axis strong:last-child { padding: 0 16px 0 0; }
.band { flex: 1; height: 34px; position: relative; display: flex; align-items: center; background: linear-gradient(#44546a, #55657f); border-bottom: 1px solid #8592ab; font-size: 12px; color: #fff; }
.band > span { padding-left: 5px; border-left: 1px solid #8592ab; line-height: 18px; position: relative; }
.band > span:first-of-type { border-color: transparent; }
.bevel { position: absolute; right: 0; top: 0; }
.past { position: absolute; left: 0; top: 0; height: 34px; background: rgba(192, 32, 48, .45); border-right: 1px solid #503850; border-bottom: 1px solid #e07070; }
.today { position: absolute; top: 35px; width: 50px; margin-left: -25px; display: flex; flex-direction: column; align-items: center; color: #000; font-size: 11px; line-height: 15px; z-index: 1; }
.mirror { height: 19px; margin: 4px 80px 0 81px; background: linear-gradient(#b3bac6, #fff); }
.tasks { flex: 1; display: grid; grid-auto-rows: 1fr; padding: 19px 0 24px; }
.row { display: flex; align-items: center; white-space: nowrap; }
.lead { display: flex; align-items: center; padding-left: 11px; font-size: 11px; font-weight: 700; color: #000; z-index: 1; }
.lead i { flex: 1; height: 1px; background: #c8c8c8; margin-left: 2px; }
.bar { height: 18px; margin-right: 3px; background: linear-gradient(rgba(255,255,255,.25), rgba(255,255,255,0) 40%) var(--c); border: 1px solid rgba(0,0,0,.3); border-top-color: rgba(0,0,0,.15); border-bottom-color: rgba(255,255,255,.2); box-shadow: inset 0 2px 2px rgba(255,255,255,.15), inset 2px 0 2px rgba(0,0,0,.08), inset -2px 0 2px rgba(0,0,0,.08); }

/* scrollbar */
.scroll { display: flex; flex-direction: column; background: #e6e6e6; border-right: 1px solid #bdbdbd; border-bottom: 1px solid #bdbdbd; padding-right: 1px; }
.scroll button { height: 15px; border: 1px solid #bbb; background: #fff; }
.track { flex: 298; background: #dadada; }
.grip { flex: 298; background: #fff; border: 1px solid #ababab; border-bottom: 0; }
.scroll .jump { border: 0; background: none; height: 18px; }
.scroll .jump:last-child { margin-bottom: 20px; }

/* task pane */
.pane { display: flex; flex-direction: column; padding: 2px 8px 5px; }
.panehead { display: flex; align-items: center; height: 37px; padding: 2px 5px 0 6px; gap: 8px; }
.panehead h2 { font-size: 21px; line-height: 28px; font-weight: 300; color: #d24726; flex: 1; padding-top: 4px; }
.panehead button { padding-bottom: 2px; }
.panebody { flex: 1; background: #fff; color: #999; }
.panebody h3 { font-size: 17px; line-height: 24px; margin: 14px 0 4px 36px; }
.panebody p { font-size: 12px; line-height: 17px; margin-left: 36px; white-space: nowrap; }
.demo { font: 8px Lato, sans-serif; }
.demo .months { fill: #fff; font-weight: 700; font-size: 9px; }
.demo .faded { fill: #999; }
.demo .fainter { fill: #bbb; }
.demo .kick { fill: #000; }
.demo .kickdate { fill: #44546a; }
.panefoot { height: 45px; background: #f4f4f4; display: flex; align-items: center; gap: 5px; padding-left: 38px; color: #777; font-size: 10px; white-space: nowrap; }
.panefoot input { appearance: none; width: 13px; height: 13px; border: 1px solid #aaa; background: #fff; }

/* status bar */
.status { height: 21px; background: #f1f1f1; display: flex; align-items: center; padding: 0 7px; line-height: 14px; }
.status > span, .notes, .comments, .pct { padding-bottom: 2px; }
.spell { margin: 0 16px 0 20px; }
.notes, .comments { gap: 5px; margin-right: 18px; }
.notes { margin-right: 20px; }
.views { display: flex; align-self: stretch; }
.views button { width: 37px; }
.views .on { background: #c8c8c8; }
.zoomer { margin: 0 4px 0 3px; }
.views + .zoomer { margin-left: 8px; }
.status input { appearance: none; width: 100px; height: 12px; background: linear-gradient(#888, #888) center / 100% 1px no-repeat, linear-gradient(#999, #999) center / 1px 7px no-repeat; }
.status input::-webkit-slider-thumb { appearance: none; width: 4px; height: 12px; background: #666; }
.pct { width: 22px; margin: 0 14px 0 10px; }

/* taskbar */
.taskbar { height: 40px; background: #101010; display: flex; color: #fff; }
.apps { display: flex; padding-left: 2px; }
.apps button { width: 49px; position: relative; }
.sys { width: 48px; }
.run::after { content: ""; position: absolute; left: 5px; bottom: 0; width: 40px; height: 2px; background: #ebf9aa; }
.multi::after { background: linear-gradient(90deg, #ebf9aa 31px, #9daa6c 31px, #b7c583 33px); }
.apps .current { background: #333; }
.apps .current::after { left: 0; width: 100%; }
.tray { display: flex; align-items: center; gap: 9px; border-right: 1px solid #555; padding-right: 19px; margin-right: 4px; }
.tray time { display: flex; flex-direction: column; align-items: center; line-height: 18px; width: 60px; }
.tray time + button { margin-left: 8px; }
```
